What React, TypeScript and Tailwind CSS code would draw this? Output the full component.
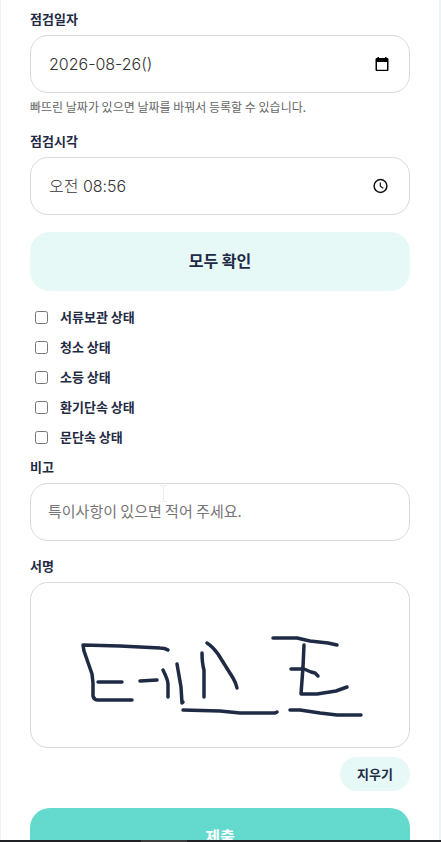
import { useState } from 'react'
import type { ReactNode } from 'react'

const checkItems = [
  { id: 'documents', label: '서류보관 상태' },
  { id: 'cleaning', label: '청소 상태' },
  { id: 'lights', label: '소등 상태' },
  { id: 'ventilation', label: '환기단속 상태' },
  { id: 'doors', label: '문단속 상태' }
] as const

const strokes = [
  'M137 67 Q134 65 129 65 L109 64 L89 63 L52 62 L53 68 L61 91 L62 100 V113 Q63 117 67 117 H101',
  'M67 99 H91',
  'M109 98 L126 97',
  'M132 87 Q137 97 137 101 V114',
  'M146 81 L150 104 L151 120 L152 119',
  'M171 70 Q171 80 173 87 V114',
  'M176 60 Q181 63 187 71 L202 95 Q205 100 206 105',
  'M152 127 L189 128 L209 130 H244 L246 129',
  'M242 55 H266 L279 58 L297 60 L306 62',
  'M273 62 L272 84 L270 111 H286 L305 108 L316 104',
  'M260 86 H273 L280 89 L284 90 L287 93',
  'M259 127 H269 L289 130 L306 132 H330'
]

export default function App() {
  const [checked, setChecked] = useState<string[]>([])
  const [signed, setSigned] = useState(true)

  const toggle = (id: string) =>
    setChecked((prev) => (prev.includes(id) ? prev.filter((item) => item !== id) : [...prev, id]))

  return (
    <div className="h-dvh overflow-y-auto bg-white font-['Noto_Sans_CJK_KR',sans-serif] text-[#1f2a44] [scrollbar-width:none]">
      <form
        className="flex flex-col border-l border-r-2 border-[#eef4f4] px-[29px] pt-[9px] pb-8"
        onSubmit={(e) => e.preventDefault()}
      >
        <Field id="date" label="점검일자">
          <PickerInput id="date" value="2026-08-26()" buttonLabel="날짜 선택">
            <CalendarIcon />
          </PickerInput>
        </Field>
        <p className="mt-1 text-xs leading-5 text-[#666666]">
          빠뜨린 날짜가 있으면 날짜를 바꿔서 등록할 수 있습니다.
        </p>

        <div className="mt-[14px]">
          <Field id="time" label="점검시각">
            <PickerInput id="time" value="오전 08:56" buttonLabel="시간 선택">
              <ClockIcon />
            </PickerInput>
          </Field>
        </div>

        <button
          type="button"
          className="mt-[17px] h-[59px] rounded-[20px] bg-[#e6f9f7] pb-1 text-base font-bold"
          onClick={() => setChecked(checkItems.map((item) => item.id))}
        >
          모두 확인
        </button>

        <ul className="mt-[11px]">
          {checkItems.map((item) => (
            <li key={item.id}>
              <label className="flex h-[30px] items-center gap-3 pl-[5px] text-[13px] font-bold">
                <input
                  type="checkbox"
                  className="size-[13px]"
                  checked={checked.includes(item.id)}
                  onChange={() => toggle(item.id)}
                />
                {item.label}
              </label>
            </li>
          ))}
        </ul>

        <div className="relative mt-[5px]">
          <Field id="note" label="비고">
            <input
              id="note"
              type="text"
              placeholder="특이사항이 있으면 적어 주세요."
              className="h-[58px] w-full rounded-[18px] border border-[#d9d9d9] px-[17px] pb-1 text-[15px] text-[#333333] outline-none placeholder:text-[#757575]"
            />
          </Field>
          <svg
            className="pointer-events-none absolute top-7 left-[130px] h-[17px] w-[7px]"
            viewBox="0 0 7 17"
            fill="none"
            stroke="#eeeeee"
            aria-hidden="true"
          >
            <path d="M0 .5h3M4 .5h3M3.5 1v15M0 16.5h3M4 16.5h3" />
          </svg>
        </div>

        <section className="mt-[15px]" aria-labelledby="signature-label">
          <h2 id="signature-label" className="text-[13px] leading-5 font-bold">
            서명
          </h2>
          <div className="mt-[6px] h-[166px] rounded-[18px] border border-[#d9d9d9]">
            {signed && <Signature />}
          </div>
        </section>
        <button
          type="button"
          className="mt-[9px] self-end rounded-full bg-[#e6f9f7] px-[17px] py-[7px] text-[13px] leading-5 font-bold"
          onClick={() => setSigned(false)}
        >
          지우기
        </button>

        <button
          type="submit"
          className="mt-[17px] h-[59px] rounded-[20px] bg-[#64d9cd] pb-1 text-base font-bold text-white"
        >
          제출
        </button>
      </form>

      <div className="fixed inset-x-0 bottom-0 flex h-[2px] bg-[#202124]">
        <span className="ml-[141px] w-[46px] bg-[#3c3c3c]" />
      </div>
    </div>
  )
}

function Field({ id, label, children }: { id: string; label: string; children: ReactNode }) {
  return (
    <div className="flex flex-col gap-[6px]">
      <label htmlFor={id} className="text-[13px] leading-5 font-bold">
        {label}
      </label>
      {children}
    </div>
  )
}

type PickerInputProps = {
  id: string
  value: string
  buttonLabel: string
  children: ReactNode
}

function PickerInput({ id, value, buttonLabel, children }: PickerInputProps) {
  return (
    <div className="flex h-[58px] items-center rounded-[18px] border border-[#d9d9d9] px-[18px]">
      <input
        id={id}
        type="text"
        defaultValue={value}
        className="min-w-0 flex-1 font-['Inter','Noto_Sans_CJK_KR',sans-serif] text-base font-light text-[#333333] outline-none"
      />
      <button type="button" aria-label={buttonLabel}>
        {children}
      </button>
    </div>
  )
}

function CalendarIcon() {
  return (
    <svg className="h-4 w-[18px]" viewBox="0 0 18 16" aria-hidden="true">
      <path
        fill="#000000"
        fillRule="evenodd"
        d="M4.5 1H6v1h6V1h1.5v1h.7c.7 0 1.3.6 1.3 1.3v10.4c0 .7-.6 1.3-1.3 1.3H3.8c-.7 0-1.3-.6-1.3-1.3V3.3C2.5 2.6 3.1 2 3.8 2h.7zM4 6v7.7h10V6z"
      />
    </svg>
  )
}

function ClockIcon() {
  return (
    <svg className="h-4 w-[18px]" viewBox="0 0 18 16" fill="none" stroke="#111111" aria-hidden="true">
      <circle cx="7.5" cy="8" r="6.4" strokeWidth="1.5" />
      <path d="M7.3 4.5v3.8l3 2" strokeWidth="1.2" />
    </svg>
  )
}

function Signature() {
  return (
    <svg
      className="h-full w-full"
      viewBox="0 0 378 164"
      fill="none"
      stroke="#1f2a44"
      strokeWidth="3.5"
      strokeLinecap="round"
      strokeLinejoin="round"
      role="img"
      aria-label="서명"
    >
      {strokes.map((d) => (
        <path key={d} d={d} />
      ))}
    </svg>
  )
}
